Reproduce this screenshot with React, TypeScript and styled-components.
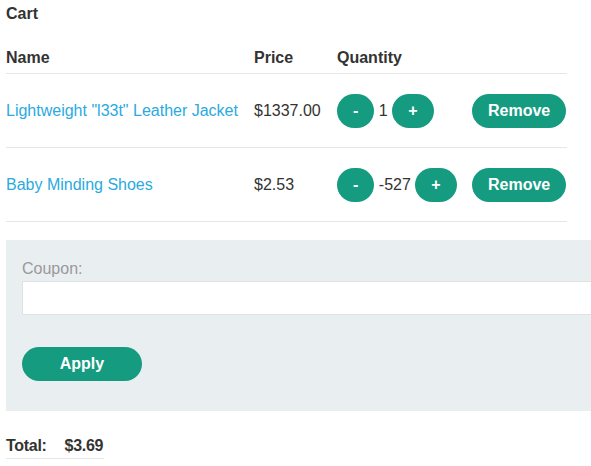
import React from "react";
import styled, { createGlobalStyle } from "styled-components";

const Global = createGlobalStyle`
  html, body { margin: 0; padding: 0; background: #fff; overflow: hidden; }
  body { font-family: "Liberation Sans", Arial, sans-serif; color: #333332; font-size: 16px; }
`;

const Page = styled.div`
  padding-left: 6px;
  width: 585px;
`;

const Title = styled.div`
  height: 28px;
  line-height: 28px;
  font-weight: bold;
  font-size: 16px;
`;

const Table = styled.div`
  margin-top: 13px;
  width: 561px;
  display: grid;
  grid-template-columns: 248px 83px 135px 95px;
`;

const HeadCell = styled.div`
  height: 32px;
  line-height: 34px;
  font-weight: bold;
  border-bottom: 1px solid #e6e6e6;
`;

const Cell = styled.div`
  height: 73px;
  display: flex;
  align-items: center;
  border-bottom: 1px solid #e6e6e6;
  gap: 4.5px;
`;

const Link = styled.a`
  color: #29aae1;
  text-decoration: none;
`;

const Button = styled.button<{ $w?: number }>`
  font-family: "Liberation Sans", Arial, sans-serif;
  font-weight: bold;
  font-size: 16px;
  color: #fff;
  background: #159b80;
  border: none;
  border-radius: 20px;
  height: 34px;
  padding: 0 16px;
  ${(p) => (p.$w ? `width: ${p.$w}px;` : "")}
  cursor: pointer;
`;

const Panel = styled.div`
  margin-top: 18px;
  width: 585px;
  height: 171px;
  box-sizing: border-box;
  background: #e9eef1;
  padding: 16px 0 0 16px;
`;

const Label = styled.div`
  color: #999;
  height: 25px;
  line-height: 26px;
`;

const Input = styled.input`
  display: block;
  box-sizing: border-box;
  width: 569px;
  height: 34px;
  border: 1px solid #dfe3e6;
  border-right: none;
  background: #fff;
  margin-bottom: 32px;
`;

const TotalRow = styled.div`
  margin-top: 21px;
  display: inline-flex;
  gap: 18px;
  height: 26px;
  line-height: 27px;
  font-weight: bold;
  font-size: 16px;
  letter-spacing: -0.3px;
  border-bottom: 1px solid #e6e6e6;
  width: 98px;
`;

const items = [
  { name: 'Lightweight "l33t" Leather Jacket', price: "$1337.00", qty: "1" },
  { name: "Baby Minding Shoes", price: "$2.53", qty: "-527" },
];

export default function App() {
  return (
    <>
      <Global />
      <Page>
        <Title>Cart</Title>
        <Table>
          <HeadCell>Name</HeadCell>
          <HeadCell>Price</HeadCell>
          <HeadCell>Quantity</HeadCell>
          <HeadCell />
          {items.map((it) => (
            <React.Fragment key={it.name}>
              <Cell>
                <Link href="#">{it.name}</Link>
              </Cell>
              <Cell>{it.price}</Cell>
              <Cell>
                <Button>-</Button>
                <span>{it.qty}</span>
                <Button>+</Button>
              </Cell>
              <Cell>
                <Button>Remove</Button>
              </Cell>
            </React.Fragment>
          ))}
        </Table>
        <Panel>
          <Label>Coupon:</Label>
          <Input />
          <Button $w={120}>Apply</Button>
        </Panel>
        <TotalRow>
          <span>Total:</span>
          <span>$3.69</span>
        </TotalRow>
      </Page>
    </>
  );
}
